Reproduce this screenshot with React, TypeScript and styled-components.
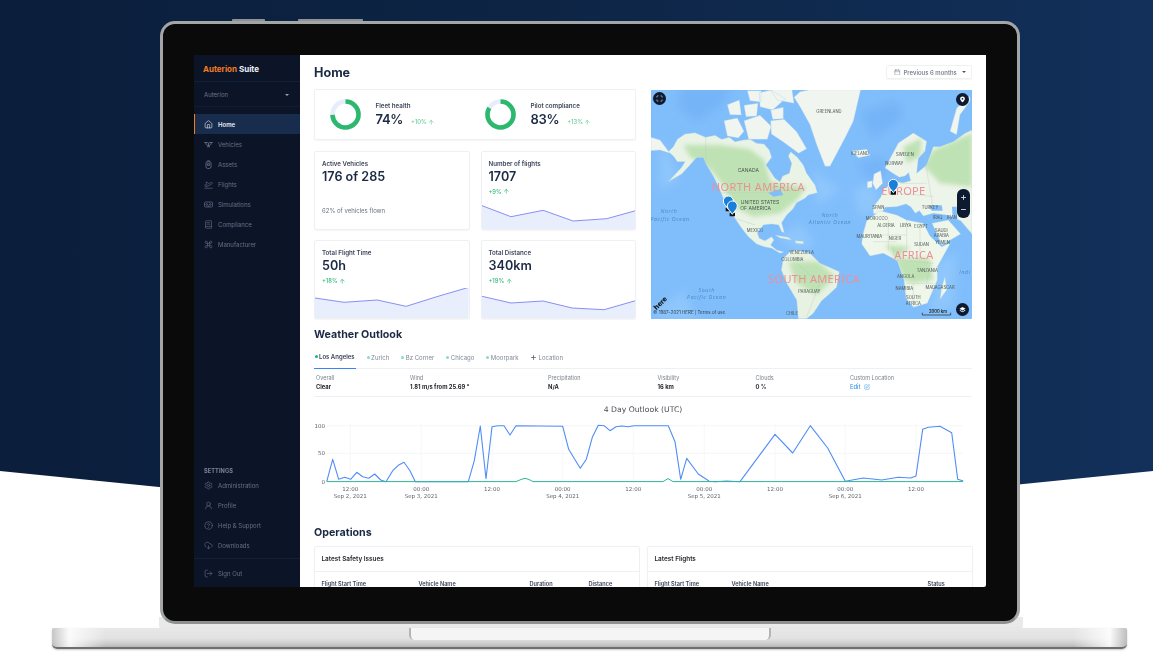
import React from "react";
import styled, { createGlobalStyle } from "styled-components";
import {
  House, PlaneTakeoff, BookText, Command, Settings, UserRound, CircleHelp, CloudDownload, LogOut,
  Calendar, Scan, Plus, Minus, SquarePen, ArrowUp, type LucideIcon,
} from "lucide-react";

const Global = createGlobalStyle`
  html, body { margin: 0; padding: 0; background: #fff; }
  body { font-family: Inter, "Noto Sans", sans-serif; }
  * { box-sizing: border-box; }
`;

const Page = styled.div`
  position: relative; width: 1153px; height: 671px; overflow: hidden; background: #fff; padding-top: 21px;
`;
const Backdrop = styled.div`
  position: absolute; inset: 0;
  background: linear-gradient(90deg, #0b1e3c 0%, #0d2444 45%, #12305a 100%);
  clip-path: polygon(0 0, 100% 0, 100% 471px, 50% 529px, 0 471px);
`;
const Laptop = styled.div`
  position: relative; width: 860px; height: 603px; margin-left: 160px; padding: 31px 31px 34px;
  background: #0a0a0a; border: 3px solid #a3a5a7; border-bottom-color: #8e9092; border-radius: 15px;
`;
const TopKey = styled.span<{ $left: number; $width: number }>`
  position: absolute; top: -5px; left: ${(p) => p.$left}px; width: ${(p) => p.$width}px; height: 2px;
  background: #8d9298; border-radius: 1px 1px 0 0;
`;
const Neck = styled.div`
  position: absolute; left: 159px; top: 617px; width: 864px; height: 11px; background: #e9e9e9;
  border-radius: 0 0 2px 2px;
`;
const Base = styled.div`
  position: relative; display: flex; justify-content: center; width: 1075px; height: 21px; margin: 4px 0 0 52px;
  background:
    linear-gradient(90deg, rgba(190,190,190,.8) 0, rgba(255,255,255,.85) 1.6%, rgba(255,255,255,0) 5%, rgba(255,255,255,0) 95%, rgba(255,255,255,.85) 98.4%, rgba(180,180,180,.8) 100%),
    linear-gradient(180deg, #e8e8e8 0, #e2e2e2 55%, #c9c9c9 85%, #b5b5b5 100%);
  border-bottom: 2px solid #6e6e6e; border-radius: 2px 2px 5px 5px; box-shadow: 0 1px 2px rgba(0,0,0,.22);
`;
const Notch = styled.div`
  width: 362px; height: 12px; background: #f5f5f5; border-radius: 0 0 5px 5px;
  border-left: 2px solid #b4b4b4; border-right: 2px solid #b4b4b4;
`;
const Screen = styled.div`
  display: flex; width: 792px; height: 532px; overflow: hidden; background: #fff; border-radius: 0 0 2px 0;
  filter: blur(.3px);
`;

const Sidebar = styled.aside`
  display: flex; flex-direction: column; width: 106px; flex: none; background: #0c1428; color: #6d778a;
  font-size: 6px; line-height: 8px;
`;
const Brand = styled.div`
  display: flex; align-items: center; gap: 2px; height: 27px; padding: 2px 0 0 9px; border-bottom: 1px solid #141f38;
  font-size: 8px; font-weight: 700; color: #eef1f5;
`;
const BrandAccent = styled.span`color: #f47b20;`;
const Org = styled.div`
  display: flex; align-items: center; justify-content: space-between; height: 25px; padding: 1.5px 11px 0 10px;
  border-bottom: 1px solid #121b32;
`;
const Caret = styled.span`
  width: 0; height: 0; border-left: 2px solid transparent; border-right: 2px solid transparent; border-top: 2px solid #9aa3b2;
`;
const NavList = styled.nav`display: flex; flex-direction: column; padding-top: 7px;`;
const NavLabel = styled.span`padding-top: 1px;`;
const NavItem = styled.div<{ $active?: boolean }>`
  display: flex; align-items: center; gap: 5.5px; height: 20px; padding-left: ${(p) => (p.$active ? 8.5 : 9.5)}px;
  border-left: ${(p) => (p.$active ? "1px solid #f47b20" : "none")};
  background: ${(p) => (p.$active ? "#182c4e" : "transparent")};
  color: ${(p) => (p.$active ? "#e8ecf3" : "#667085")};
  font-weight: ${(p) => (p.$active ? 600 : 400)};
  svg { width: 9px; height: 9px; flex: none; }
`;
const SideBottom = styled.div`margin-top: auto;`;
const SettingsLabel = styled.div`
  height: 9px; padding: 1px 0 0 10px; font-size: 5.6px; font-weight: 700; color: #7a8498; letter-spacing: .1px;
`;
const SignOutBox = styled.div`
  display: flex; align-items: center; height: 29px; margin-top: 3px; border-top: 1px solid #141f38;
`;

const Main = styled.main`
  flex: 1; min-width: 0; padding: 0 14px; overflow: hidden; color: #1b2a44;
`;
const Header = styled.header`
  display: flex; align-items: center; justify-content: space-between; height: 34px;
`;
const Title = styled.h1`margin: 0; font-size: 12.6px; font-weight: 700; color: #1b2a44;`;
const RangeButton = styled.button`
  display: flex; align-items: center; gap: 3px; width: 86px; height: 14px; padding: 0 0 0 7px; background: #fff;
  border: 1px solid #eef0f2; border-radius: 1.5px; box-shadow: 0 1px 1px rgba(0,0,0,.04);
  font: 500 6px Inter, sans-serif; color: #6b7280;
  svg { width: 6.5px; height: 6.5px; }
`;
const ButtonCaret = styled(Caret)`margin-left: 2px; border-top-color: #555;`;
const TopGrid = styled.div`
  display: grid; grid-template-columns: 322px 321px; column-gap: 15px;
`;
const LeftStack = styled.div`display: flex; flex-direction: column; gap: 10.5px;`;
const Card = styled.div`
  background: #fff; border: 1px solid #eff0f3; border-radius: 2px; box-shadow: 0 .5px 1px rgba(20,30,50,.04);
`;
const HealthCard = styled(Card)`
  display: grid; grid-template-columns: 155px 1fr; align-items: center; height: 51px; padding: 0 14.5px;
`;
const Health = styled.div`display: flex; align-items: center; gap: 15px;`;
const DonutSvg = styled.svg`flex: none; width: 31px; height: 31px;`;
const HealthText = styled.div`display: flex; flex-direction: column; gap: 1px;`;
const MetricTitle = styled.div`font-size: 6.2px; line-height: 8px; font-weight: 600; color: #3c4559;`;
const MetricLine = styled.div`display: flex; align-items: baseline; gap: 8px;`;
const MetricValue = styled.div`font-size: 13px; line-height: 16px; font-weight: 600; color: #1b2a44; letter-spacing: -.3px;`;
const Delta = styled.div<{ $pale?: boolean }>`
  display: flex; align-items: center; gap: 1.5px; font-size: 5.8px; line-height: 8px; font-weight: 500;
  color: ${(p) => (p.$pale ? "#6ccb9c" : "#36b67b")};
  svg { width: 6.5px; height: 6.5px; }
`;
const StatGrid = styled.div`display: grid; grid-template-columns: 155.5px 155.5px; gap: 10.5px 11px;`;
const StatCard = styled(Card)`
  display: flex; flex-direction: column; height: 79px; padding-top: 8px; overflow: hidden;
`;
const StatHead = styled.div`padding: 0 7px; display: flex; flex-direction: column; gap: 1px;`;
const StatValue = styled(MetricValue)`font-size: 12.6px; letter-spacing: 0;`;
const StatDelta = styled(Delta)`margin-top: 2px;`;
const StatNote = styled.div`margin: auto 0 14px; padding: 0 7px; font-size: 6px; line-height: 8px; color: #6b7280;`;
const Spark = styled.svg`display: block; width: 100%; height: 30px; margin-top: auto; flex: none;`;

const MapBox = styled.div`
  position: relative; height: 229px; margin-top: 1px; overflow: hidden; background: #80bdfb; border-radius: 1px;
`;
const MapSvg = styled.svg`display: block; width: 321px; height: 229px;`;
const MapButton = styled.div<{ $x: number; $y: number }>`
  position: absolute; left: ${(p) => p.$x}px; top: ${(p) => p.$y}px; width: 13px; height: 13px; border-radius: 50%;
  background: #0d1a30; color: #fff; display: flex; align-items: center; justify-content: center;
  svg { width: 7px; height: 7px; }
`;
const ZoomPill = styled.div`
  position: absolute; left: 306px; top: 99px; width: 12.5px; height: 29px; border-radius: 6px; background: #0d1a30;
  color: #dfe3ea; display: flex; flex-direction: column; align-items: center; justify-content: space-around; padding: 2px 0;
  svg { width: 7px; height: 7px; }
`;

const SectionTitle = styled.h2<{ $top: number }>`
  margin: ${(p) => p.$top}px 0 0; font-size: 10.7px; line-height: 14px; font-weight: 700; color: #1b2a44;
`;
const Tabs = styled.div`
  display: flex; gap: 10.5px; height: 20px; margin-top: 7px; border-bottom: 1px solid #eef0f3; font-size: 6px;
`;
const Tab = styled.div<{ $active?: boolean }>`
  display: flex; align-items: center; gap: 1.5px; height: 20px; padding: 0 1px 4px 0;
  color: ${(p) => (p.$active ? "#3c4559" : "#7f8897")};
  font-weight: ${(p) => (p.$active ? 600 : 400)};
  border-bottom: ${(p) => (p.$active ? "1px solid #3b82f6" : "none")};
  svg { width: 7px; height: 7px; color: #555c68; }
`;
const Dot = styled.i<{ $active?: boolean }>`
  width: 3px; height: 3px; border-radius: 50%; margin-left: .5px; background: ${(p) => (p.$active ? "#10b981" : "#86dcc5")};
`;
const InfoRow = styled.div`
  display: grid; grid-template-columns: 94px 138px 109.5px 98px 94.5px 1fr; height: 28px; padding: 5.5px 0 0 2px;
  border-bottom: 1px solid #eef0f3;
`;
const InfoLabel = styled.div`font-size: 5.5px; line-height: 7px; color: #7a808c;`;
const InfoValue = styled.div`
  display: flex; align-items: center; gap: 3px; margin-top: 1.5px; font-size: 5.8px; line-height: 8px; font-weight: 700; color: #26282e;
`;
const EditValue = styled(InfoValue)`
  color: #3b9ae8; font-weight: 500; svg { width: 6px; height: 6px; }
`;
const ChartSvg = styled.svg`display: block; width: 658px; height: 110px;`;
const OpsGrid = styled.div`
  display: grid; grid-template-columns: 326px 326px; column-gap: 7px; margin-top: 6px;
`;
const OpsCard = styled(Card)`height: 80px;`;
const OpsTitle = styled.div`
  display: flex; align-items: center; height: 25px; padding-left: 6.5px; border-bottom: 1px solid #eff0f3;
  font-size: 6.4px; font-weight: 600; color: #26282e;
`;
const OpsHead = styled.div<{ $cols: string }>`
  display: grid; grid-template-columns: ${(p) => p.$cols}; padding: 8px 0 0 6.5px; font-size: 5.6px; line-height: 8px;
  font-weight: 600; color: #3c4559;
`;

const DroneIcon = () => (
  <svg viewBox="0 0 16 16" fill="none" stroke="currentColor" strokeWidth="1.6" strokeLinecap="round">
    <path d="M1 4.5h5M10 4.5h5M3.5 4.5v3l2 2h5l2-2v-3M8 5.5v5M6 12h4" />
  </svg>
);
const AssetIcon = () => (
  <svg viewBox="0 0 16 16" fill="none" stroke="currentColor" strokeWidth="1.5">
    <rect x="3.5" y="3" width="9" height="12" rx="3" />
    <path d="M6 3V1.5h4V3M6 6.5h4v3H6z" />
  </svg>
);
const GogglesIcon = () => (
  <svg viewBox="0 0 18 16" fill="none" stroke="currentColor" strokeWidth="1.4">
    <rect x="1" y="3" width="16" height="10" rx="2" />
    <circle cx="5.5" cy="8" r="1.7" /><circle cx="12.5" cy="8" r="1.7" />
    <path d="M7.5 13 9 10.5 10.5 13" />
  </svg>
);
const SolidPin = () => (
  <svg viewBox="0 0 16 16" fill="#fff">
    <path fillRule="evenodd" d="M8 1a5.5 5.5 0 0 0-5.5 5.5C2.5 10 8 15 8 15s5.500-5 5.500-8.500A5.500 5.500 0 0 0 8 1Zm0 3.500a2 2 0 1 1 0 4 2 2 0 0 1 0-4Z" />
  </svg>
);
const SolidLayers = () => (
  <svg viewBox="0 0 16 16" fill="#fff">
    <path d="M8 2 15 6.200 8 10.400 1 6.200Z" />
    <path d="M2.800 9.300 8 12.400 13.200 9.300 15 10.300 8 14.500 1 10.300Z" />
  </svg>
);
const lucide = (I: LucideIcon) => () => <I strokeWidth={1.6} />;
const nav: [string, React.FC][] = [
  ["Home", lucide(House)], ["Vehicles", DroneIcon], ["Assets", AssetIcon], ["Flights", lucide(PlaneTakeoff)],
  ["Simulations", GogglesIcon], ["Compliance", lucide(BookText)], ["Manufacturer", lucide(Command)],
];
const settings: [string, LucideIcon][] = [
  ["Administration", Settings], ["Profile", UserRound], ["Help & Support", CircleHelp], ["Downloads", CloudDownload],
];

const Donut = ({ pct }: { pct: number }) => {
  const r = 13;
  const c = 2 * Math.PI * r;
  return (
    <DonutSvg viewBox="0 0 31 31">
      <circle cx="15.5" cy="15.5" r={r} fill="none" stroke="#e7edfb" strokeWidth="4.6" />
      <circle cx="15.5" cy="15.5" r={r} fill="none" stroke="#2cb96e" strokeWidth="4.6"
        strokeDasharray={`${(c * pct) / 100} ${c}`} transform="rotate(-90 15.5 15.5)" />
    </DonutSvg>
  );
};

const AreaChart = ({ pts, x0, bottom }: { pts: number[][]; x0: number; bottom: number }) => {
  const p = pts.map(([x, y]) => `${((x - x0) / 3).toFixed(1)},${(30 - (bottom - y) / 3).toFixed(1)}`);
  return (
    <Spark viewBox="0 0 155 30" preserveAspectRatio="none">
      <polygon points={`0,30 ${p.join(" ")} 155,30`} fill="#e8eefc" />
      <polyline points={p.join(" ")} fill="none" stroke="#7b83f0" strokeWidth=".9" />
    </Spark>
  );
};

const lbl = { fontFamily: "Inter, sans-serif", fontSize: 15, fill: "#4a5552", textAnchor: "middle" as const };
const red = { fontFamily: "'Noto Sans', sans-serif", fontSize: 33, fill: "#ee8f95", textAnchor: "middle" as const, letterSpacing: 1 };
const sea = { fontFamily: "'Open Sans', sans-serif", fontSize: 15.5, fill: "#4d86c4", fontStyle: "italic", textAnchor: "middle" as const, letterSpacing: 2 };

const Pin = ({ x, y, ring }: { x: number; y: number; ring?: boolean }) => (
  <g>
    <rect x={x - 8} y={y + 18} width="16" height="11" rx="1" fill="#111" />
    <path d={`M${x} ${y + 23} C${x - 6} ${y + 13} ${x - 15} ${y + 8} ${x - 15} ${y - 2} a15 15 0 0 1 30 0 C${x + 15} ${y + 8} ${x + 6} ${y + 13} ${x} ${y + 23}Z`}
      fill="#1a7fd8" stroke={ring ? "#fff" : "none"} strokeWidth="3" />
  </g>
);

const coast = "#a5cde8";
const countries: [number, number, string][] = [
  [567,190,"GREENLAND"],[660,315,"ICELAND"],[795,318,"SWEDEN"],[763,344,"NORWAY"],[345,547,"MEXICO"],[485,611,"VENEZUELA"],
  [457,632,"COLOMBIA"],[508,730,"PARAGUAY"],[456,795,"CHILE"],[715,477,"SPAIN"],[710,509,"MOROCCO"],[738,530,"ALGERIA"],
  [797,532,"LIBYA"],[843,535,"EGYPT"],[688,564,"MAURITANIA"],[765,571,"NIGER"],[845,587,"SUDAN"],[862,667,"TANZANIA"],
  [797,683,"ANGOLA"],[793,720,"NAMIBIA"],[900,718,"MADAGASCAR"],[820,748,"SOUTH"],[820,764,"AFRICA"],[870,477,"TURKEY"],
  [893,508,"IRAQ"],[936,508,"IRAN"],[904,546,"SAUDI"],[904,561,"ARABIA"],[908,581,"YEMEN"],
];

const WorldMap = () => (
  <MapSvg viewBox="33 120 963 687">
    <defs>
      <filter id="soft"><feGaussianBlur stdDeviation="1.3" /></filter>
      <filter id="tint" x="-15%" y="-15%" width="130%" height="130%"><feGaussianBlur stdDeviation="6" /></filter>
      <filter id="haze" x="-30%" y="-30%" width="160%" height="160%"><feGaussianBlur stdDeviation="14" /></filter>
      <clipPath id="landClip">
        <path d="M100 290 L112 268 L135 252 L165 248 L197 262 L225 256 L245 268 L268 262 L285 275 L310 270 L330 268 L350 280 L372 282 L388 300 L395 322 L378 345 L392 365 L405 385 L420 395 L428 378 L448 370 L455 340 L445 318 L452 305 L472 322 L490 345 L500 370 L525 405 L532 428 L505 435 L495 445 L470 458 L458 478 L440 495 L425 518 L433 548 L425 545 L416 525 L395 522 L370 525 L352 548 L358 565 L375 572 L395 560 L402 570 L392 585 L410 600 L432 606 L420 610 L395 595 L372 590 L350 582 L325 560 L305 535 L288 510 L272 485 L258 462 L248 440 L235 408 L218 375 L200 345 L190 322 L170 322 L150 345 L125 372 L85 395 L125 352 L135 335 L112 335 L100 318 L85 305 Z
          M700 470 L722 442 L732 415 L752 405 L770 396 L790 398 L812 392 L806 368 L795 378 L778 382 L762 372 L735 354 L775 279 L820 249 L860 274 L855 304 L835 325 L830 370 L860 345 L880 290 L900 290 L940 275 L975 250 L996 240 L996 552 L962 512 L920 495 L880 490 L850 498 L838 482 L826 490 L812 470 L798 462 L770 470 L735 472 L722 495 L700 490 Z
          M668 555 L680 512 L720 482 L770 495 L800 510 L850 520 L870 558 L905 590 L932 578 L892 650 L892 690 L862 760 L820 772 L798 745 L792 690 L772 632 L730 610 L690 618 L665 582 Z
          M430 625 L450 605 L470 600 L510 610 L540 640 L575 655 L598 665 L590 712 L565 735 L545 752 L520 790 L500 806 L475 806 L470 750 L440 700 L424 660 Z" />
      </clipPath>
    </defs>
    <rect x="33" y="120" width="963" height="687" fill="#80bdfb" />
    <g filter="url(#haze)">
      <path d="M125 110 L275 110 L245 165 L170 215 L115 175 Z M660 190 L770 150 L790 200 L700 270 Z M650 340 L730 320 L750 360 L690 395 Z" fill="#74b4f7" />
      <path d="M33 800 L130 720 L170 810 Z M415 560 L480 520 L530 590 L460 600 Z M640 420 L700 400 L720 480 L660 500 Z M880 640 L950 610 L940 770 L870 800 Z M60 260 L120 390 L60 420 Z M520 360 L600 420 L530 470 Z" fill="#8fc7fc" />
    </g>
    <g filter="url(#soft)" strokeLinejoin="round" stroke={coast} strokeWidth="1">
      <path fill="#e9f3e6"
        d="M100 290 L112 268 L135 252 L165 248 L197 262 L225 256 L245 268 L268 262 L285 275 L310 270 L330 268 L350 280 L372 282 L388 300 L395 322 L378 345 L392 365 L405 385 L420 395 L428 378 L448 370 L455 340 L445 318 L452 305 L472 322 L490 345 L500 370 L525 405 L532 428 L505 435 L495 445 L470 458 L458 478 L440 495 L425 518 L433 548 L425 545 L416 525 L395 522 L370 525 L352 548 L358 565 L375 572 L395 560 L402 570 L392 585 L410 600 L432 606 L420 610 L395 595 L372 590 L350 582 L325 560 L305 535 L288 510 L272 485 L258 462 L248 440 L235 408 L218 375 L200 345 L190 322 L170 322 L150 345 L125 372 L85 395 L125 352 L135 335 L112 335 L100 318 L85 305 Z" />
      <path fill="#f0f5f0"
        d="M462 142 L480 125 L510 119 L662 119 L640 214 L615 264 L570 349 L555 349 L530 284 L510 224 L480 170 Z
        M252 212 L292 204 L312 244 L295 264 L262 258 Z M262 164 L298 150 L304 195 L270 194 Z
        M312 212 L360 196 L394 229 L382 268 L326 268 Z M322 122 L364 122 L362 156 L330 152 Z
        M358 128 L392 120 L436 146 L398 180 L360 170 Z M390 119 L456 119 L462 160 L412 150 Z
        M392 212 L432 208 L470 245 L500 296 L476 310 L430 276 L394 252 Z M312 166 L354 160 L350 198 L318 200 Z M392 180 L430 172 L430 206 L398 208 Z
        M635 303 L680 298 L690 316 L655 323 Z M33 262 L60 270 L90 310 L60 300 L33 302 Z
        M702 372 L722 362 L728 400 L708 420 L698 400 Z M682 395 L697 392 L696 412 L682 414 Z
        M930 244 L950 174 L990 139 L990 154 L960 194 L950 254 Z" />
      <path fill="#edf4ea"
        d="M700 470 L722 442 L732 415 L752 405 L770 396 L790 398 L812 392 L806 368 L795 378 L778 382 L762 372 L735 354 L775 279 L820 249 L860 274 L855 304 L835 325 L830 370 L860 345 L880 290 L900 290 L940 275 L975 250 L996 240 L996 552 L962 512 L920 495 L880 490 L850 498 L838 482 L826 490 L812 470 L798 462 L770 470 L735 472 L722 495 L700 490 Z" />
      <path fill="#eff6ea"
        d="M668 555 L680 512 L720 482 L770 495 L800 510 L850 520 L870 558 L905 590 L932 578 L892 650 L892 690 L862 760 L820 772 L798 745 L792 690 L772 632 L730 610 L690 618 L665 582 Z
        M876 520 L925 510 L962 552 L905 585 L888 545 Z M905 712 L915 680 L920 720 L900 748 Z" />
      <path fill="#e8f2e2"
        d="M430 625 L450 605 L470 600 L510 610 L540 640 L575 655 L598 665 L590 712 L565 735 L545 752 L520 790 L500 806 L475 806 L470 750 L440 700 L424 660 Z" />
      <path fill="#e4efdc" strokeWidth=".6" d="M405 555 L445 562 L455 570 L420 564 Z M465 572 L490 574 L490 582 L468 580 Z" />
    </g>
    <g clipPath="url(#landClip)">
      <path filter="url(#tint)" fill="#bfe2b4"
        d="M130 285 L240 285 L330 298 L372 330 L392 395 L440 405 L500 410 L470 450 L420 490 L340 500 L280 470 L245 400 L205 350 L150 320 Z
        M445 635 L535 635 L585 680 L530 735 L470 700 Z
        M880 300 L996 250 L996 410 L900 400 L850 345 Z M790 290 L845 265 L840 320 L800 340 Z
        M765 625 L870 625 L880 690 L820 700 L790 690 Z M735 585 L810 590 L770 625 Z" />
    </g>
    <path fill="#80bdfb" d="M868 466 L905 466 L908 482 L875 482 Z M936 470 L950 470 L952 510 L938 505 Z M385 428 L420 418 L430 435 L400 440 Z" />
    <path fill="none" stroke="#bcc2bc" strokeWidth="1"
      d="M197 262 V330 L215 360 M240 428 H390 L430 405 M285 505 L345 525 M745 510 V600 M800 510 V610 M680 555 H800 M840 520 V630 M770 630 L880 640 M800 700 H880 M820 700 V770 M470 640 L540 700 L500 800 M850 300 L880 480 M790 430 L880 440 M780 400 L860 400 M700 575 L770 575 M760 590 L760 620 M870 640 L860 700" />
    {countries.map(([x, y, t]) => <text key={`${t}${x}`} {...lbl} x={x} y={y} fontSize="12.5">{t}</text>)}
    <text {...lbl} x="325" y="365">CANADA</text>
    <text {...lbl} x="360" y="461">UNITED STATES</text>
    <text {...lbl} x="347" y="481">OF AMERICA</text>
    <text {...sea} x="87" y="490">North</text>
    <text {...sea} x="90" y="512">Pacific Ocean</text>
    <text {...sea} x="570" y="500">North</text>
    <text {...sea} x="570" y="522">Atlantic Ocean</text>
    <text {...sea} x="200" y="725">South</text>
    <text {...sea} x="200" y="747">Pacific Ocean</text>
    <text {...sea} x="975" y="671">Indi</text>
    <text {...red} x="355" y="424">NORTH AMERICA</text>
    <text {...red} x="522" y="700">SOUTH AMERICA</text>
    <text {...red} x="790" y="434">EUROPE</text>
    <text {...red} x="822" y="626">AFRICA</text>
    <Pin x={265} y={455} ring />
    <Pin x={277} y={470} ring />
    <Pin x={760} y={405} ring />
    <text x="62" y="766" fontFamily="Inter, sans-serif" fontSize="21" fontWeight="800" fill="#111" textAnchor="middle" transform="rotate(-45 62 760)">here</text>
    <text x="40" y="791" fontFamily="Inter, sans-serif" fontSize="13.4" fill="#33424f">© 1987–2021 HERE | Terms of use</text>
    <text x="894" y="788" fontFamily="Inter, sans-serif" fontSize="12.5" fontWeight="600" fill="#222" textAnchor="middle">2000 km</text>
    <path d="M847 788 V795 H932 V788" fill="none" stroke="#222" strokeWidth="2" />
  </MapSvg>
);

const line3a = [[80,485],[98,418],[116,478],[134,472],[152,478],[170,457],[188,470],[206,475],[224,462],[242,480],[258,485],[278,452],[295,436],[312,427],[330,452],[346,485],[505,485],[523,422],[541,318],[558,476],[576,320],[594,317],[612,317],[630,345],[648,317],[788,319],[806,388],[824,418],[841,445],[859,418],[877,352],[895,316],[912,317],[930,332],[948,320],[966,318],[984,320],[1002,317]];
const line4 = [[85,257],[105,305],[122,418],[140,355],[175,402],[208,424],[225,425],[260,423],[300,425],[405,283],[458,339],[511,257],[563,324],[616,424],[670,414],[725,420],[775,412],[812,414],[828,408],[848,268],[865,262],[900,259],[935,278],[953,418],[970,423]];
const blue = [
  ...line3a.map(([x, y]) => `${(300 + x / 3).toFixed(1)},${(320 + y / 3).toFixed(1)}`),
  ...line4.map(([x, y]) => `${(640 + x / 3).toFixed(1)},${(340 + y / 3).toFixed(1)}`),
].join(" ");
const ticks: [number, string, string?][] = [
  [350.3, "12:00", "Sep 2, 2021"], [421.3, "00:00", "Sep 3, 2021"], [492, "12:00"], [562.7, "00:00", "Sep 4, 2021"],
  [633.3, "12:00"], [704.3, "00:00", "Sep 5, 2021"], [775, "12:00"], [845.3, "00:00", "Sep 6, 2021"], [916, "12:00"],
];
const tickStyle = { fontFamily: "'DejaVu Sans', sans-serif", fontSize: 5.5, fill: "#5f6570" };

const Outlook = () => (
  <ChartSvg viewBox="314 397 658 110">
    <text x="643" y="412" textAnchor="middle" fontFamily="'DejaVu Sans', sans-serif" fontSize="7.7" fill="#4a4d55">4 Day Outlook (UTC)</text>
    {[425.7, 453.3].map((y) => <line key={y} x1="327" x2="963" y1={y} y2={y} stroke="#f1f2f4" strokeWidth=".7" />)}
    {ticks.map(([x]) => <line key={x} x1={x} x2={x} y1="423" y2="481" stroke="#f3f4f5" strokeWidth=".7" />)}
    {[[100, 427.7], [50, 455.3], [0, 483.7]].map(([v, y]) => (
      <text key={v} {...tickStyle} x="325" y={y} textAnchor="end">{v}</text>
    ))}
    {ticks.map(([x, t, d]) => (
      <g key={x}>
        <text {...tickStyle} x={x} y="490.5" textAnchor="middle">{t}</text>
        {d && <text {...tickStyle} x={x} y="498" textAnchor="middle">{d}</text>}
      </g>
    ))}
    <polyline points={blue} fill="none" stroke="#4f8df7" strokeWidth="1.1" strokeLinejoin="round" />
    <polyline points="327,481.6 516,481.6 521,479.5 525,478.3 529,479.5 533,481.6 663,481.6 668,478.6 673,481.6 963,481.6"
      fill="none" stroke="#2fb79a" strokeWidth="1" />
  </ChartSvg>
);

const tabs = ["Los Angeles", "Zurich", "Bz Corner", "Chicago", "Moorpark"];
const info: [string, string][] = [
  ["Overall", "Clear"], ["Wind", "1.81 m/s from 25.69 °"], ["Precipitation", "N/A"], ["Visibility", "16 km"], ["Clouds", "0 %"],
];

export default function App() {
  return (
    <Page>
      <Global />
      <Backdrop />
      <Neck />
      <Laptop>
        <TopKey $left={69} $width={33} />
        <TopKey $left={135} $width={65} />
        <Screen>
          <Sidebar>
            <Brand><BrandAccent>Auterion</BrandAccent>Suite</Brand>
            <Org>Auterion<Caret /></Org>
            <NavList>
              {nav.map(([name, Icon], i) => (
                <NavItem key={name} $active={i === 0}><Icon /><NavLabel>{name}</NavLabel></NavItem>
              ))}
            </NavList>
            <SideBottom>
              <SettingsLabel>SETTINGS</SettingsLabel>
              {settings.map(([name, Icon]) => (
                <NavItem key={name}><Icon strokeWidth={1.6} /><NavLabel>{name}</NavLabel></NavItem>
              ))}
              <SignOutBox><NavItem><LogOut strokeWidth={1.6} /><NavLabel>Sign Out</NavLabel></NavItem></SignOutBox>
            </SideBottom>
          </Sidebar>
          <Main>
            <Header>
              <Title>Home</Title>
              <RangeButton><Calendar strokeWidth={1.6} />Previous 6 months<ButtonCaret /></RangeButton>
            </Header>
            <TopGrid>
              <LeftStack>
                <HealthCard>
                  <Health>
                    <Donut pct={74} />
                    <HealthText>
                      <MetricTitle>Fleet health</MetricTitle>
                      <MetricLine><MetricValue>74%</MetricValue><Delta $pale>+10% <ArrowUp strokeWidth={2.4} /></Delta></MetricLine>
                    </HealthText>
                  </Health>
                  <Health>
                    <Donut pct={83} />
                    <HealthText>
                      <MetricTitle>Pilot compliance</MetricTitle>
                      <MetricLine><MetricValue>83%</MetricValue><Delta $pale>+13% <ArrowUp strokeWidth={2.4} /></Delta></MetricLine>
                    </HealthText>
                  </Health>
                </HealthCard>
                <StatGrid>
                  <StatCard>
                    <StatHead><MetricTitle>Active Vehicles</MetricTitle><StatValue>176 of 285</StatValue></StatHead>
                    <StatNote>62% of vehicles flown</StatNote>
                  </StatCard>
                  <StatCard>
                    <StatHead>
                      <MetricTitle>Number of flights</MetricTitle><StatValue>1707</StatValue>
                      <StatDelta>+9% <ArrowUp strokeWidth={2.4} /></StatDelta>
                    </StatHead>
                    <AreaChart x0={527} bottom={433} pts={[[527,363],[615,396],[712,377],[803,409],[905,402],[992,378]]} />
                  </StatCard>
                  <StatCard>
                    <StatHead>
                      <MetricTitle>Total Flight Time</MetricTitle><StatValue>50h</StatValue>
                      <StatDelta>+18% <ArrowUp strokeWidth={2.4} /></StatDelta>
                    </StatHead>
                    <AreaChart x0={27} bottom={250} pts={[[27,190],[115,203],[215,196],[303,215],[400,185],[493,158]]} />
                  </StatCard>
                  <StatCard>
                    <StatHead>
                      <MetricTitle>Total Distance</MetricTitle><StatValue>340km</StatValue>
                      <StatDelta>+19% <ArrowUp strokeWidth={2.4} /></StatDelta>
                    </StatHead>
                    <AreaChart x0={527} bottom={250} pts={[[527,185],[615,205],[712,199],[800,220],[897,225],[992,198]]} />
                  </StatCard>
                </StatGrid>
              </LeftStack>
              <MapBox>
                <WorldMap />
                <MapButton $x={1.8} $y={2.2}><Scan strokeWidth={2} /></MapButton>
                <MapButton $x={305.2} $y={2.5}><SolidPin /></MapButton>
                <MapButton $x={305.2} $y={213}><SolidLayers /></MapButton>
                <ZoomPill><Plus strokeWidth={3} /><Minus strokeWidth={3} /></ZoomPill>
              </MapBox>
            </TopGrid>
            <SectionTitle $top={9}>Weather Outlook</SectionTitle>
            <Tabs>
              {tabs.map((t, i) => (
                <Tab key={t} $active={i === 0}><Dot $active={i === 0} />{t}</Tab>
              ))}
              <Tab><Plus strokeWidth={2.6} />Location</Tab>
            </Tabs>
            <InfoRow>
              {info.map(([l, v]) => (
                <div key={l}><InfoLabel>{l}</InfoLabel><InfoValue>{v}</InfoValue></div>
              ))}
              <div><InfoLabel>Custom Location</InfoLabel><EditValue>Edit <SquarePen strokeWidth={2} /></EditValue></div>
            </InfoRow>
            <Outlook />
            <SectionTitle $top={19}>Operations</SectionTitle>
            <OpsGrid>
              <OpsCard>
                <OpsTitle>Latest Safety Issues</OpsTitle>
                <OpsHead $cols="97px 111px 59px 1fr">
                  <span>Flight Start Time</span><span>Vehicle Name</span><span>Duration</span><span>Distance</span>
                </OpsHead>
              </OpsCard>
              <OpsCard>
                <OpsTitle>Latest Flights</OpsTitle>
                <OpsHead $cols="77px 196px 1fr">
                  <span>Flight Start Time</span><span>Vehicle Name</span><span>Status</span>
                </OpsHead>
              </OpsCard>
            </OpsGrid>
          </Main>
        </Screen>
      </Laptop>
      <Base><Notch /></Base>
    </Page>
  );
}
